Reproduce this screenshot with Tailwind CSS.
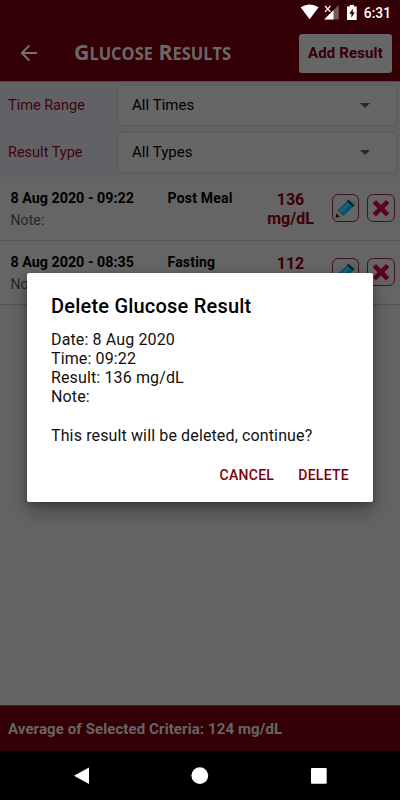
<!DOCTYPE html>
<html lang="en"><head><meta charset="utf-8"><title>Glucose Results</title>
<script src="https://cdn.jsdelivr.net/npm/@tailwindcss/browser@4"></script></head>
<body class="w-[400px] h-[800px] overflow-hidden bg-[#646467] font-['Roboto',sans-serif] text-black">
<svg class="hidden"><defs>
<g id="pencil"><path d="M3.5 23.8 5.2 16.2 11.2 21.8Z" fill="#75653f"/><path d="M3.5 23.8 4.4 19.5 8 22.8Z" fill="#07091c"/><path d="M5.2 16.5 15.3 7 21.3 12.5 11.2 22Z" fill="#0b4f68"/><path d="M7 17.2 16.6 8.2 18.8 10.2 9.2 19.4Z" fill="#17637c"/><path d="M15 7.2 16.5 5.8 22.5 11.2 21 12.8Z" fill="#0b1220"/><path d="M16.5 5.8 18.3 4.2H20.8L23.7 7V9.8L22.5 11.2Z" fill="#50636d"/></g>
<path id="cross" d="M9 6 14 11 19 6 22.3 9.3 17.3 14.3 22.3 19.3 19 22.6 14 17.6 9 22.6 5.7 19.3 10.7 14.3 5.7 9.3Z" fill="#5e001f"/>
</defs></svg>
<div class="relative w-[400px] h-[800px] flex flex-col">
  <header class="h-[81px] bg-[#330006] flex flex-col shrink-0">
    <div class="h-[25px] flex justify-end items-center pr-[9px] text-white">
      <svg width="65" height="25" viewBox="0 0 65 25" fill="#fff"><path d="M1.6 7.3Q10.6 1.5 19.6 7.3L10.6 19.2Z"/><path d="M39.8 5V19.5H25.2Z" fill="#80535a"/><path d="M34.5 10.3V19.5H25.2Z"/><path d="M26 6 31.4 11.8M31.4 6 26 11.8" stroke="#330006" stroke-width="3"/><path d="M26 6 31.4 11.8M31.4 6 26 11.8" stroke="#fff" stroke-width="1.2"/><path d="M50.7 5H55V6.5H57.7V20H48V6.5H50.7Z"/><path d="M53.8 8.6 50.4 13.8H52.4V17.8L55.8 12.3H53.8Z" fill="#330006"/></svg>
      <span class="text-[13.8px] font-medium leading-[25px] pt-px">6:31</span>
    </div>
    <div class="h-14 flex items-center pl-[20px] pr-2">
      <svg class="shrink-0" width="18" height="18" viewBox="0 0 18 18" fill="none" stroke="#777173" stroke-width="1.8"><path d="M17 9H2M9.3 1.5 1.8 9 9.3 16.5"/></svg>
      <svg class="ml-[34px] shrink-0 overflow-visible" width="164" height="40" viewBox="0 0 164 40" fill="#6c6768"><text x="2" y="27" class="font-['Open_Sans',sans-serif] font-bold text-[22px]" textLength="157" lengthAdjust="spacingAndGlyphs">G<tspan class="text-[17px]">LUCOSE</tspan> R<tspan class="text-[17px]">ESULTS</tspan></text></svg>
      <button class="ml-auto w-[93px] h-[39px] rounded-[3px] bg-[#666] text-[#330006] text-[15px] font-bold whitespace-nowrap tracking-[0.12px] pt-px">Add Result</button>
    </div>
  </header>
  <section class="h-[96px] shrink-0 bg-[#626266] border-t border-[#504c4f] pt-[3px] pl-2 pr-[3px] flex flex-col gap-[7px] text-[15px]">
    <div class="flex items-center h-10"><span class="w-[109px] text-[#400408] text-[14.5px] pt-px whitespace-nowrap">Time Range</span><div class="w-[280px] h-[41px] border border-[#59595b] rounded-[4px] bg-[#666] flex items-center justify-between pl-[14px] pr-[26px]"><span class="tracking-[0.04px]">All Times</span><i class="border-x-[5px] border-x-transparent border-t-[5px] border-t-[#292929]"></i></div></div>
    <div class="flex items-center h-10"><span class="w-[109px] text-[#400408] text-[14.5px] pt-px whitespace-nowrap">Result Type</span><div class="w-[280px] h-[41px] border border-[#59595b] rounded-[4px] bg-[#666] flex items-center justify-between pl-[14px] pr-[26px]"><span class="tracking-[0.04px]">All Types</span><i class="border-x-[5px] border-x-transparent border-t-[5px] border-t-[#292929]"></i></div></div>
  </section>
  <main class="flex-1 text-[14px]">
    <div class="h-[64px] bg-[#656565] border-b border-[#535355] flex pl-[10.5px]">
      <div class="w-[157px] pt-[11px]"><b class="block leading-5 text-[14.3px]">8 Aug 2020 - 09:22</b><span class="block mt-[2px] leading-5 text-[#262626] tracking-[0.1px]">Note:</span></div>
      <b class="w-[88px] pt-[11px] leading-5 tracking-[0.2px]">Post Meal</b>
      <b class="w-[70px] pt-[13px] leading-[19px] text-[16px] text-center text-[#3d0006]">136<br>mg/dL</b>
      <div class="flex gap-2 pt-[17px] pl-[6.5px]"><div class="w-[27px] h-[28px] border border-[#3a1519] rounded-[6px]"><svg class="-m-px" width="27" height="28"><use href="#pencil"/></svg></div><div class="size-[28px] border border-[#3a1519] rounded-[6px]"><svg class="-m-px" width="28" height="28"><use href="#cross"/></svg></div></div>
    </div>
    <div class="h-[64px] bg-[#656565] border-b border-[#535355] flex pl-[10.5px]">
      <div class="w-[157px] pt-[11px]"><b class="block leading-5 text-[14.3px]">8 Aug 2020 - 08:35</b><span class="block mt-[2px] leading-5 text-[#262626] tracking-[0.1px]">Note:</span></div>
      <b class="w-[88px] pt-[11px] leading-5 tracking-[0.2px]">Fasting</b>
      <b class="w-[70px] pt-[13px] leading-[19px] text-[16px] text-center text-[#3d0006]">112<br>mg/dL</b>
      <div class="flex gap-2 pt-[17px] pl-[6.5px]"><div class="w-[27px] h-[28px] border border-[#3a1519] rounded-[6px]"><svg class="-m-px" width="27" height="28"><use href="#pencil"/></svg></div><div class="size-[28px] border border-[#3a1519] rounded-[6px]"><svg class="-m-px" width="28" height="28"><use href="#cross"/></svg></div></div>
    </div>
  </main>
  <footer class="h-[46px] shrink-0 bg-[#330006] border-t border-[#263026] pl-2 pt-[2px] flex items-center text-[15px] tracking-[0.1px] font-bold text-[#666] whitespace-nowrap">Average of Selected Criteria: 124 mg/dL</footer>
  <nav class="h-[49px] shrink-0 bg-black"><svg width="400" height="49" fill="#fff"><path d="M74 24.7 89 16.5V33Z"/><circle cx="199.8" cy="24.6" r="8.4"/><rect x="311" y="17" width="15.7" height="15.7" rx="1"/></svg></nav>
  <div role="dialog" class="absolute left-[27px] top-[273px] w-[346px] h-[229px] bg-white rounded-[2px] shadow-[0_10px_20px_rgba(0,0,0,0.3),0_2px_6px_rgba(0,0,0,0.25)] px-6 pt-5 flex flex-col">
    <h1 class="text-[20px] leading-[27px] font-medium tracking-[0.21px] whitespace-nowrap">Delete Glucose Result</h1>
    <div class="mt-[9.6px] text-[16px] leading-[19.3px] tracking-[0.13px] text-[#111] whitespace-nowrap">Date: 8 Aug 2020<br>Time: 09:22<br>Result: 136 mg/dL<br>Note:<br><br>This result will be deleted, continue?</div>
    <div class="mt-[19.5px] flex justify-end gap-6 text-[14px] leading-5 font-medium tracking-[0.28px] text-[#7a000c]"><span>CANCEL</span><span>DELETE</span></div>
  </div>
</div>
</body></html>
